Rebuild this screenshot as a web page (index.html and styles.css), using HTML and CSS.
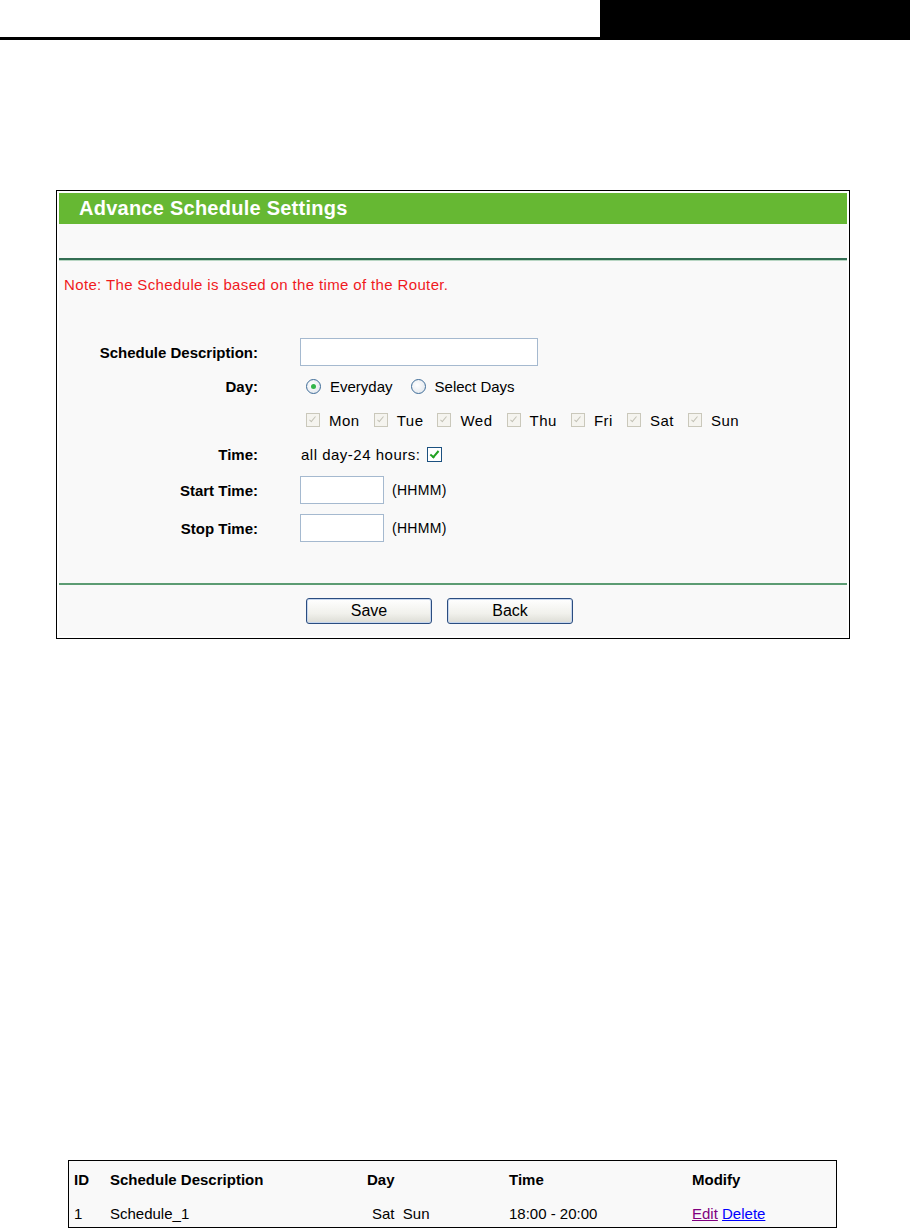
FILE: index.html
```html
<!DOCTYPE html>
<html>
<head>
<meta charset="utf-8">
<link rel="stylesheet" href="styles.css">
</head>
<body>
<header class="top">
  <div class="top-line"></div>
  <div class="top-block"></div>
</header>

<section class="panel">
  <div class="panel-title">Advance Schedule Settings</div>
  <div class="panel-band"></div>
  <div class="rule"></div>
  <p class="note">Note: The Schedule is based on the time of the Router.</p>

  <div class="form">
    <div class="row">
      <div class="label">Schedule Description:</div>
      <div class="value"><span class="input input-wide"></span></div>
    </div>
    <div class="row">
      <div class="label">Day:</div>
      <div class="value">
        <span class="radio checked"></span><span class="opt">Everyday</span>
        <span class="radio"></span><span class="opt">Select Days</span>
      </div>
    </div>
    <div class="row">
      <div class="label"></div>
      <div class="value days">
        <span class="cb disabled"></span><span class="day">Mon</span>
        <span class="cb disabled"></span><span class="day">Tue</span>
        <span class="cb disabled"></span><span class="day">Wed</span>
        <span class="cb disabled"></span><span class="day">Thu</span>
        <span class="cb disabled"></span><span class="day">Fri</span>
        <span class="cb disabled"></span><span class="day">Sat</span>
        <span class="cb disabled"></span><span class="day">Sun</span>
      </div>
    </div>
    <div class="row">
      <div class="label">Time:</div>
      <div class="value"><span class="opt allday">all day-24 hours:</span><span class="cb on"></span></div>
    </div>
    <div class="row row-tall">
      <div class="label">Start Time:</div>
      <div class="value"><span class="input input-short"></span><span class="hint">(HHMM)</span></div>
    </div>
    <div class="row row-tall">
      <div class="label">Stop Time:</div>
      <div class="value"><span class="input input-short"></span><span class="hint">(HHMM)</span></div>
    </div>
  </div>

  <div class="rule rule-bottom"></div>
  <div class="buttons">
    <span class="btn">Save</span>
    <span class="btn">Back</span>
  </div>
</section>

<section class="list">
  <div class="list-row list-head">
    <span>ID</span><span>Schedule Description</span><span>Day</span><span>Time</span><span>Modify</span>
  </div>
  <div class="list-row list-body">
    <span>1</span><span>Schedule_1</span><span class="day-cell">Sat&nbsp; Sun</span><span>18:00 - 20:00</span><span><a class="edit">Edit</a> <a class="del">Delete</a></span>
  </div>
</section>
</body>
</html>
```

FILE: styles.css
```css
html, body {
  margin: 0;
  padding: 0;
  background: #fff;
  font-family: "Liberation Sans", Arial, sans-serif;
  font-size: 15px;
  color: #000;
}

.top {
  display: flex;
  height: 40px;
}
.top-line {
  flex: 1;
  border-bottom: 3px solid #000;
}
.top-block {
  width: 310px;
  background: #000;
}

.panel {
  margin: 150px 0 0 56px;
  width: 788px;
  border: 1px solid #000;
  padding: 2px;
  background: #fff;
}
.panel-title {
  height: 31px;
  line-height: 31px;
  background: #66b833;
  color: #fff;
  font-weight: bold;
  font-size: 20px;
  letter-spacing: 0.25px;
  padding-left: 20px;
}
.panel-band {
  height: 34px;
  background: #f9f9f9;
}
.rule {
  height: 0;
  border-top: 2px solid #336e53;
  border-bottom: 1px solid #b8d6c3;
}
.note {
  margin: 0;
  background: #f9f9f9;
  color: #f0191e;
  padding: 16px 0 0 5px;
  line-height: 16px;
  letter-spacing: 0.36px;
  height: 58px;
}

.form {
  background: #f9f9f9;
  padding-bottom: 36px;
}
.row {
  display: grid;
  grid-template-columns: 199px 1fr;
  column-gap: 42px;
  height: 34px;
  align-items: center;
}
.row-tall {
  height: 38px;
}
.label {
  text-align: right;
  font-weight: bold;
}
.value {
  display: flex;
  align-items: center;
}

.input {
  display: inline-block;
  box-sizing: border-box;
  background: #fff;
  border: 1px solid #a5b9cf;
}
.input-wide {
  width: 238px;
  height: 28px;
}
.input-short {
  width: 84px;
  height: 28px;
}
.hint {
  margin-left: 8px;
  font-size: 14px;
  letter-spacing: 0.3px;
}

.radio {
  box-sizing: border-box;
  width: 15px;
  height: 15px;
  border-radius: 50%;
  border: 1px solid #3e6c98;
  background: radial-gradient(circle at 40% 40%, #ffffff, #dde3ea);
  margin: 0 9px 0 6px;
  position: relative;
}
.radio.checked::after {
  content: "";
  position: absolute;
  left: 4px;
  top: 4px;
  width: 5px;
  height: 5px;
  border-radius: 50%;
  background: #33b54a;
}
.opt {
  margin-right: 12px;
}
.allday {
  margin-left: 1px;
  letter-spacing: 0.5px;
  margin-right: 12px;
}

.cb {
  box-sizing: border-box;
  width: 14px;
  height: 14px;
  position: relative;
  display: inline-block;
}
.cb::after {
  content: "";
  position: absolute;
  left: 4px;
  top: 1px;
  width: 3px;
  height: 7px;
  border-right: 2px solid;
  border-bottom: 2px solid;
  transform: rotate(40deg);
}
.cb.disabled {
  border: 1px solid #cac8bb;
  background: #f5f4ef;
  margin: 0 9px 0 6px;
}
.cb.disabled::after {
  border-color: #c3c2b6;
  width: 2px;
  height: 6px;
  left: 4px;
  border-right-width: 1.5px;
  border-bottom-width: 1.5px;
}
.cb.on {
  border: 1px solid #1c5180;
  background: #fff;
  margin-left: -5px;
  width: 15px;
  height: 15px;
}
.cb.on::after {
  border-color: #21a121;
  left: 4px;
  top: 1px;
}
.days .day {
  margin-right: 8px;
  letter-spacing: 0.5px;
  color: #000;
}

.rule-bottom {
  border-top: 2px solid #5c9c73;
  border-bottom: 0;
}
.buttons {
  display: flex;
  gap: 15px;
  padding: 13px 0 12px 247px;
  background: #f9f9f9;
}
.btn {
  box-sizing: border-box;
  width: 126px;
  height: 26px;
  line-height: 24px;
  text-align: center;
  font-size: 16px;
  border: 1px solid #2b4d80;
  border-radius: 3px;
  background: linear-gradient(#ffffff, #f1f1ec 60%, #dcdcd5);
  box-shadow: inset 0 0 0 1px #c6d6ee;
}

.list {
  margin: 521px 0 0 68px;
  width: 767px;
  border: 1px solid #000;
  background: #f9f9f9;
}
.list-row {
  display: grid;
  grid-template-columns: 36px 257px 142px 183px 1fr;
  padding-left: 5px;
  align-items: center;
}
.list-head {
  font-weight: bold;
  height: 36px;
}
.list-body {
  box-sizing: border-box;
  height: 30px;
  padding-top: 3px;
}
.day-cell {
  padding-left: 5px;
}
.edit {
  color: #800080;
  text-decoration: underline;
}
.del {
  color: #0000ff;
  text-decoration: underline;
}
```
